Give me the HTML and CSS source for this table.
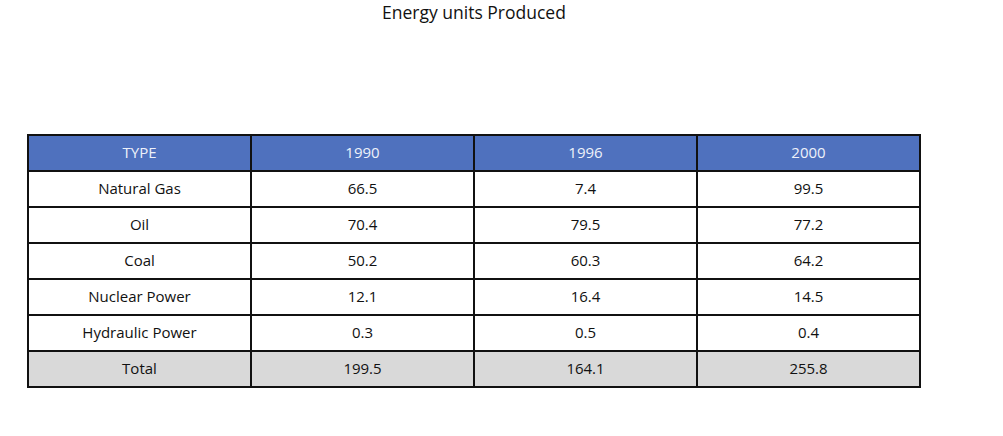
FILE: index.html
```html
<!DOCTYPE html>
<html>
<head>
<meta charset="utf-8">
<link rel="stylesheet" href="styles.css">
</head>
<body>
<div class="wrap">
  <h1 class="title">Energy units Produced</h1>
  <table class="energy">
    <thead>
      <tr><th>TYPE</th><th>1990</th><th>1996</th><th>2000</th></tr>
    </thead>
    <tbody>
      <tr><td>Natural Gas</td><td>66.5</td><td>7.4</td><td>99.5</td></tr>
      <tr><td>Oil</td><td>70.4</td><td>79.5</td><td>77.2</td></tr>
      <tr><td>Coal</td><td>50.2</td><td>60.3</td><td>64.2</td></tr>
      <tr><td>Nuclear Power</td><td>12.1</td><td>16.4</td><td>14.5</td></tr>
      <tr><td>Hydraulic Power</td><td>0.3</td><td>0.5</td><td>0.4</td></tr>
      <tr class="total"><td>Total</td><td>199.5</td><td>164.1</td><td>255.8</td></tr>
    </tbody>
  </table>
</div>
</body>
</html>
```
FILE: styles.css
```css
html, body {
  margin: 0;
  padding: 0;
  background: #ffffff;
}
body {
  font-family: "Open Sans", "Liberation Sans", sans-serif;
  color: #111111;
}
.wrap {
  margin-left: 27px;
  width: 894px;
}
.title {
  margin: 0;
  padding-top: 0;
  height: 134px;
  text-align: center;
  font-size: 17.5px;
  font-weight: 400;
  line-height: 24px;
  color: #111111;
}
.energy {
  width: 894px;
  border-collapse: collapse;
  table-layout: fixed;
  border: 2px solid #111111;
}
.energy th,
.energy td {
  border: 2px solid #111111;
  height: 32px;
  padding: 0 0 2px 0;
  text-align: center;
  font-size: 15px;
  font-weight: 400;
  line-height: 20px;
}
.energy th {
  background: #4f71be;
  color: #eef1fa;
}
.energy .total td {
  background: #d9d9d9;
}
```
